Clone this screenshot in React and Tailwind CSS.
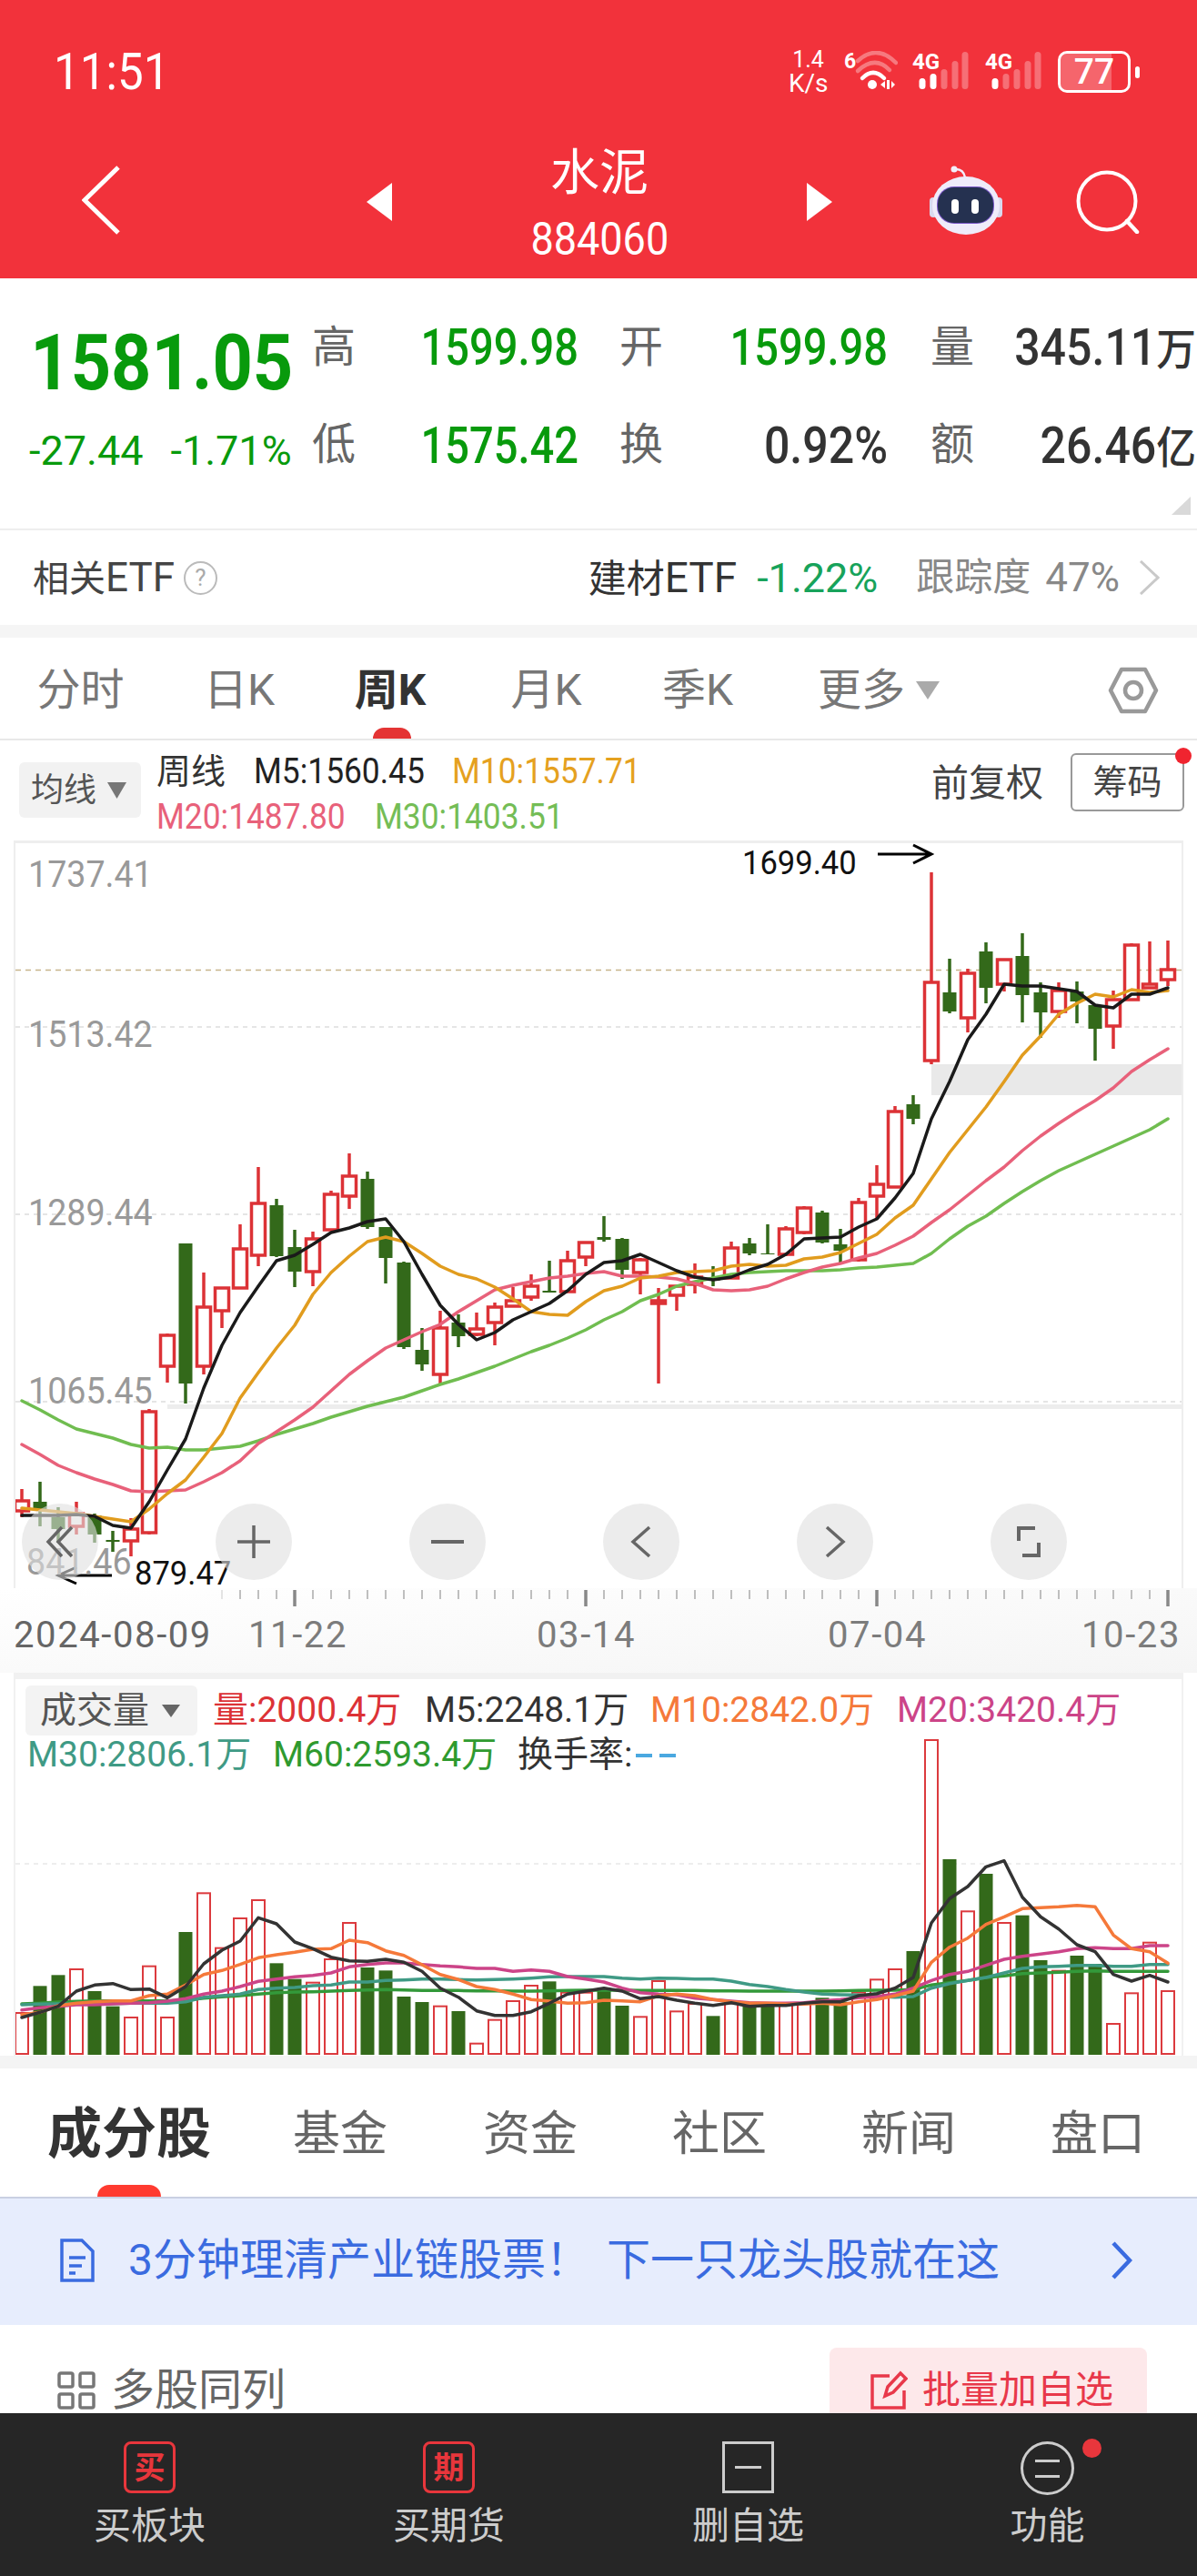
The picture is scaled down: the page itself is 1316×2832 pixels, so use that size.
import React from "react";

const NUM = "font-['Roboto','Noto_Sans_CJK_SC',sans-serif]";

// [kind, bodyTop, bodyBottom, wickTop, wickBottom]
const candles = [
  ["r",1651,1662,1638,1669],["g",1652,1660,1630,1679],["g",1669,1682,1658,1697],["r",1665,1679,1652,1688],
  ["g",1667,1688,1665,1697],["g",1694,1696,1684,1707],["r",1682,1695,1670,1712],["r",1553,1686,1550,1688],
  ["r",1469,1503,1467,1521],["g",1368,1522,1368,1544],["r",1438,1503,1400,1512],["r",1417,1442,1417,1461],
  ["r",1374,1417,1347,1417],["r",1324,1381,1284,1393],["g",1326,1382,1319,1383],["g",1372,1399,1353,1416],
  ["r",1363,1399,1355,1415],["r",1314,1353,1310,1353],["r",1294,1316,1269,1330],["g",1297,1350,1289,1352],
  ["g",1350,1384,1350,1412],["g",1389,1482,1388,1484],["g",1485,1501,1461,1508],["r",1461,1512,1442,1523],
  ["g",1455,1470,1446,1482],["r",1462,1468,1444,1470],["r",1438,1455,1433,1480],["r",1431,1437,1416,1437],
  ["r",1415,1427,1402,1431],["g",1420,1422,1387,1422],["r",1387,1421,1376,1421],["r",1367,1383,1367,1393],
  ["g",1361,1364,1338,1366],["g",1363,1397,1362,1407],["r",1386,1400,1384,1424],["r",1431,1434,1417,1522],
  ["r",1415,1425,1415,1442],["r",1405,1413,1390,1423],["g",1407,1409,1393,1415],["r",1373,1406,1366,1406],
  ["g",1368,1379,1362,1381],["g",1379,1380,1347,1380],["r",1352,1380,1349,1382],["r",1329,1356,1327,1358],
  ["g",1334,1367,1332,1368],["g",1369,1376,1352,1389],["r",1323,1386,1318,1388],["r",1303,1316,1282,1340],
  ["r",1223,1306,1217,1307],["g",1215,1231,1205,1237],["r",1081,1167,960,1171],["g",1092,1113,1055,1115],
  ["r",1071,1120,1066,1136],["g",1047,1087,1037,1104],["r",1056,1083,1056,1091],["g",1052,1095,1027,1125],
  ["g",1092,1114,1081,1142],["r",1090,1113,1081,1120],["g",1091,1102,1080,1126],["g",1106,1132,1106,1167],
  ["r",1100,1129,1090,1154],["r",1040,1100,1038,1101],["r",1083,1087,1036,1087],["r",1067,1078,1035,1085],
];

const ma5 = [1667,1667,1667,1666,1668,1678,1681,1652,1617,1583,1527,1480,1444,1415,1387,1381,1369,1356,1351,1344,1341,1366,1402,1436,1457,1474,1466,1452,1443,1434,1420,1402,1389,1387,1380,1389,1398,1405,1408,1405,1397,1391,1380,1363,1362,1361,1350,1341,1318,1291,1231,1190,1144,1116,1083,1085,1085,1088,1091,1106,1109,1094,1094,1087];
const ma10 = [1659,1661,1663,1665,1668,1671,1674,1660,1643,1628,1603,1577,1538,1510,1483,1458,1424,1400,1382,1366,1361,1366,1379,1393,1402,1407,1416,1429,1443,1446,1447,1432,1420,1415,1406,1404,1400,1399,1398,1393,1391,1393,1392,1385,1383,1378,1368,1358,1340,1326,1297,1268,1243,1218,1190,1161,1140,1116,1104,1094,1097,1089,1092,1090];
const ma20 = [1589,1600,1612,1620,1627,1633,1640,1641,1640,1639,1630,1620,1607,1588,1575,1562,1548,1530,1512,1497,1483,1474,1465,1457,1443,1431,1419,1414,1410,1406,1404,1401,1399,1404,1404,1405,1407,1412,1419,1420,1419,1415,1407,1400,1394,1390,1384,1379,1370,1360,1345,1331,1315,1299,1284,1266,1250,1236,1223,1211,1197,1179,1166,1154];
const ma30 = [1541,1551,1562,1572,1577,1582,1589,1593,1592,1595,1595,1593,1591,1585,1578,1572,1566,1559,1553,1547,1542,1537,1530,1523,1517,1510,1503,1495,1487,1480,1472,1463,1452,1443,1431,1424,1415,1410,1406,1402,1400,1399,1398,1398,1398,1397,1395,1394,1392,1390,1379,1363,1349,1338,1324,1311,1299,1288,1279,1270,1261,1252,1243,1231];

// volume bar tops, on a scale three times finer than the page
const volTops = [1122,1033,997,978,1050,1100,1137,968,1137,855,727,908,810,750,958,1010,1022,945,825,972,982,1068,1086,1100,1116,1223,1145,1083,1032,1018,1055,1055,1040,1098,1135,1017,1117,1092,1132,1090,1095,1095,1090,1090,1072,1085,1055,1012,978,918,222,615,787,663,825,800,948,983,933,960,1158,1057,890,1050];
const volM5 = [1137,1120,1100,1050,1030,1025,1045,1043,1072,1035,960,915,885,808,828,888,910,938,950,952,945,955,985,1040,1070,1115,1130,1130,1118,1090,1060,1050,1040,1050,1075,1068,1080,1090,1097,1088,1100,1097,1097,1090,1085,1085,1065,1058,1040,1005,825,745,705,640,620,740,805,845,897,920,995,1017,998,1020];
const volM10 = [1128,1120,1098,1090,1085,1082,1082,1065,1060,1030,995,982,962,940,930,922,912,910,882,890,917,932,963,995,1012,1035,1045,1060,1078,1083,1090,1088,1080,1082,1085,1065,1060,1065,1078,1085,1090,1090,1093,1093,1090,1095,1085,1078,1065,1050,955,905,875,830,805,778,775,772,767,772,865,910,920,958];
const volM20 = [1112,1105,1100,1095,1095,1092,1090,1088,1083,1075,1060,1050,1035,1018,1010,1003,998,990,970,962,957,957,962,967,970,975,975,985,980,985,1002,1010,1020,1040,1055,1060,1062,1073,1078,1083,1088,1090,1090,1088,1082,1078,1072,1068,1060,1040,1015,995,985,965,945,935,928,920,910,907,910,910,900,900];
const volM30 = [1095,1093,1092,1092,1091,1091,1090,1090,1090,1085,1070,1065,1060,1045,1040,1038,1032,1030,1020,1020,1015,1013,1010,1010,1012,1013,1012,1010,1007,1003,1002,1002,1002,1007,1010,1007,1008,1010,1010,1017,1028,1035,1045,1053,1060,1062,1063,1067,1070,1068,1040,1025,1015,1005,990,975,970,968,965,965,968,968,962,962];
const volM60 = [1092,1090,1086,1084,1082,1082,1082,1082,1082,1080,1073,1069,1065,1060,1055,1053,1052,1050,1048,1046,1045,1046,1048,1048,1048,1049,1049,1050,1050,1049,1048,1047,1047,1047,1048,1048,1048,1048,1049,1049,1050,1050,1050,1050,1050,1049,1048,1047,1047,1045,1030,1022,1015,1005,1000,992,990,988,985,983,985,985,985,985];

const cx = (i) => 24 + 20 * i;
const volY = (z) => 1840 + z / 3;
const pts = (arr) => arr.map((y, i) => `${cx(i)},${y}`).join(" ");
const volPts = (arr) => arr.map((y, i) => `${cx(i)},${volY(y).toFixed(1)}`).join(" ");

function Line({ points, color, width = 3.5 }) {
  return <polyline points={points} fill="none" stroke={color} strokeWidth={width} strokeLinejoin="round" strokeLinecap="round" />;
}

function Signal({ active }) {
  const bars = [[11, 12], [23, 17], [35, 22], [47, 31], [58, 41]];
  return (
    <div className="relative w-[63px] h-[46px]">
      <svg width="63" height="46" viewBox="0 0 63 46" className="block">
        {bars.map(([x, h], i) => (
          <rect key={i} x={x - 3.5} y={42 - h} width="7" height={h} rx="3.5" fill="#fff" opacity={i < active ? 1 : 0.3} />
        ))}
      </svg>
      <span className="absolute left-0 top-0 text-[24px] leading-none font-bold">4G</span>
    </div>
  );
}

function StatusIcons() {
  return (
    <div className={`flex items-center ${NUM} text-white`}>
      <div className="w-[43px] text-center">
        <div className="text-[25px] leading-[26px]">1.4</div>
        <div className="text-[28px] leading-[26px]">K/s</div>
      </div>
      <div className="relative ml-[18px] w-[59px] h-[46px]">
        <svg width="59" height="46" viewBox="0 0 59 46" fill="none" stroke="#fff" className="block">
          <path d="M15 11Q36-8 57 13" strokeOpacity=".35" strokeWidth="4.5" strokeLinecap="round" />
          <path d="M15 22Q34 4.500 50 21" strokeOpacity=".35" strokeWidth="4.5" strokeLinecap="round" />
          <path d="M20 30Q32 18 44 30" strokeWidth="4.5" strokeLinecap="round" />
          <circle cx="31" cy="37" r="5" fill="#fff" stroke="none" />
          <path d="M40 37l5-4v8zM47 32h3v10h-3zM52 33l4 4-4 4z" fill="#fff" stroke="none" />
        </svg>
        <span className="absolute left-0 top-0 text-[23px] leading-none font-bold">6</span>
      </div>
      <div className="ml-[16px]"><Signal active={2} /></div>
      <div className="ml-[17px]"><Signal active={1} /></div>
      <div className="ml-[17px] w-[80px] h-[46px] rounded-[10px] border-[3px] border-white flex items-center overflow-hidden relative">
        <div className="absolute inset-y-0 left-0 w-[76%] bg-white/25" />
        <span className="relative w-[74px] text-center text-[39px] leading-none font-medium">77</span>
      </div>
      <div className="ml-[5px] w-[5px] h-[13px] rounded-full bg-white" />
    </div>
  );
}

function Robot() {
  return (
    <svg width="82" height="77" viewBox="0 0 82 77" className="block">
      <circle cx="28" cy="4" r="3.500" fill="#f3eefc" />
      <path d="M30 4c6 0 9 4 10 9" fill="none" stroke="#f3eefc" strokeWidth="2.500" />
      <rect x="1" y="35" width="8" height="22" rx="4" fill="#d9d9ee" />
      <rect x="73" y="35" width="8" height="22" rx="4" fill="#d9d9ee" />
      <ellipse cx="41" cy="44" rx="37" ry="32" fill="#efecfa" />
      <rect x="9" y="23" width="63" height="41" rx="19" fill="#7a58c8" />
      <rect x="10" y="24" width="61" height="39" rx="18" fill="#253150" />
      <rect x="25" y="37" width="8" height="16" rx="4" fill="#fff" />
      <rect x="47" y="37" width="8" height="16" rx="4" fill="#fff" />
    </svg>
  );
}

function Header() {
  return (
    <header className="h-[306px] bg-[#f2323b] text-white shrink-0">
      <div className="h-[158px] flex items-center justify-between pl-[59px] pr-[63px]">
        <span className={`${NUM} inline-block origin-left scale-x-[.93] text-[55px] leading-none`}>11:51</span>
        <StatusIcons />
      </div>
      <div className="h-[124px] flex items-center pl-[90px]">
        <svg width="42" height="76" viewBox="0 0 42 76" className="block shrink-0">
          <path d="M40 2 3 38l37 36" fill="none" stroke="#fff" strokeWidth="5" />
        </svg>
        <svg width="28" height="42" viewBox="0 0 28 42" className="block shrink-0 ml-[271px] mt-[4px]"><path d="M28 0v42L0 21z" fill="#fff" /></svg>
        <div className="w-[456px] shrink-0 flex flex-col items-center">
          <span className="text-[54px] leading-[52px] mt-[10px]">水泥</span>
          <span className={`${NUM} inline-block scale-x-[.9] text-[50px] leading-[44px] mt-[24px]`}>884060</span>
        </div>
        <svg width="28" height="42" viewBox="0 0 28 42" className="block shrink-0 mt-[4px]"><path d="M0 0v42l28-21z" fill="#fff" /></svg>
        <div className="ml-[106px]"><Robot /></div>
        <svg width="70" height="70" viewBox="0 0 70 70" className="block ml-[80px] mt-[4px]">
          <circle cx="34" cy="34" r="31.500" fill="none" stroke="#fff" strokeWidth="4" />
          <path d="m56 56 11 12" fill="none" stroke="#fff" strokeWidth="4.500" strokeLinecap="round" />
        </svg>
      </div>
    </header>
  );
}

function Quote() {
  const label = "text-[48px] leading-none text-[#666]";
  const green = `${NUM} origin-right scale-x-[.855] text-[55px] leading-none text-[#089a0c] text-right font-medium`;
  const dark = `${NUM} origin-right scale-x-[.91] whitespace-nowrap text-[55px] leading-none text-[#333] text-right font-medium`;
  return (
    <section className="relative h-[275px] pt-[23px] bg-white shrink-0">
      <div className="grid grid-cols-[343px_48px_245px_93px_247px_95px_244px] grid-rows-[106px_106px] items-center">
        <div className={`${NUM} pl-[37px] mt-[34px] origin-left scale-x-[.9] text-[86px] leading-none text-[#089a0c] font-bold whitespace-nowrap`}>1581.05</div>
        <div className={label}>高</div>
        <div className={green}>1599.98</div>
        <div className={`${label} text-right`}>开</div>
        <div className={green}>1599.98</div>
        <div className={`${label} text-right`}>量</div>
        <div className={dark}>345.11<span className="text-[48px]">万</span></div>

        <div className={`${NUM} pl-[32px] mt-[14px] flex gap-[30px] text-[45px] leading-none text-[#089a0c]`}>
          <span>-27.44</span>
          <span>-1.71%</span>
        </div>
        <div className={`${label} mt-[2px]`}>低</div>
        <div className={`${green} mt-[4px]`}>1575.42</div>
        <div className={`${label} text-right mt-[2px]`}>换</div>
        <div className={`${dark} mt-[4px]`}>0.92%</div>
        <div className={`${label} text-right mt-[2px]`}>额</div>
        <div className={`${dark} mt-[4px]`}>26.46<span className="text-[48px]">亿</span></div>
      </div>
      <svg width="21" height="20" viewBox="0 0 21 20" className="absolute right-[7px] bottom-[15px]"><path d="M21 0v20H0z" fill="#d9d9d9" /></svg>
    </section>
  );
}

function EtfRow() {
  return (
    <>
      <div className="h-[106px] shrink-0 flex items-center justify-between border-t-2 border-[#eeeeee] pl-[36px] pr-[41px] bg-white">
        <div className="flex items-center">
          <span className="text-[40px] leading-none text-[#444]"><span>相关</span><span className={`${NUM} text-[44px]`}>ETF</span></span>
          <span className="ml-[10px] w-[37px] h-[37px] rounded-full border-2 border-[#bbbbbb] text-[26px] leading-[33px] text-center text-[#aaaaaa]">?</span>
        </div>
        <div className="flex items-center">
          <span className="text-[42px] leading-none text-[#333]">建材<span className={`${NUM} text-[46px]`}>ETF</span></span>
          <span className={`${NUM} ml-[22px] text-[45px] leading-none text-[#17a35b]`}>-1.22%</span>
          <span className="ml-[42px] text-[42px] leading-none text-[#888]">跟踪度</span>
          <span className={`${NUM} ml-[16px] text-[44px] leading-none text-[#888]`}>47%</span>
          <svg width="23" height="38" viewBox="0 0 23 38" className="block ml-[21px]"><path d="m2 1 19 18L2 37" fill="none" stroke="#c9c9c9" strokeWidth="3" /></svg>
        </div>
      </div>
      <div className="h-[14px] shrink-0 bg-[#f5f5f5]" />
    </>
  );
}

function PeriodTabs() {
  const items = ["分时", "日K", "周K", "月K", "季K"];
  return (
    <div className="relative h-[113px] shrink-0 bg-white border-b-2 border-[#e8e8e8] flex items-center pl-[2px] pt-[5px]">
      <div className="grid grid-cols-[173px_176px_156px_187px_146px_210px] items-center">
        {items.map((t) => (
          <div key={t} className={`relative text-center text-[48px] leading-none ${t === "周K" ? "font-bold text-[#333]" : "text-[#777]"}`}>
            {t}
            {t === "周K" && <span className="absolute left-[59px] top-[65px] w-[42px] h-[12px] rounded-t-full rounded-b-[4px] bg-[#e43434]" />}
          </div>
        ))}
        <div className="flex items-center pl-[59px] text-[48px] leading-none text-[#777]">
          更多
          <svg width="26" height="20" viewBox="0 0 26 20" className="block ml-[12px] shrink-0"><path d="M0 0h26L13 20z" fill="#aaaaaa" /></svg>
        </div>
      </div>
      <svg width="56" height="52" viewBox="0 0 56 52" className="block ml-[168px]">
        <path d="M15 3h26l12 23-12 23H15L3 26z" fill="none" stroke="#999" strokeWidth="4.500" strokeLinejoin="round" />
        <circle cx="28" cy="26" r="9" fill="none" stroke="#999" strokeWidth="4.500" />
      </svg>
    </div>
  );
}

function Legend() {
  const item = `${NUM} origin-left scale-x-[.93] text-[38px] leading-none`;
  return (
    <div className="h-[110px] shrink-0 flex bg-white pl-[21px] pr-[14px] pt-[15px]">
      <div className="mt-[9px] w-[134px] h-[61px] rounded-[6px] bg-[#f2f2f2] flex items-center pl-[13px]">
        <span className="text-[36px] leading-none text-[#555]">均线</span>
        <svg width="21" height="18" viewBox="0 0 21 18" className="block ml-[12px]"><path d="M0 0h21L10.5 18z" fill="#777" /></svg>
      </div>
      <div className="ml-[17px] w-[560px]">
        <div className="flex items-center h-[38px]">
          <span className="text-[38px] leading-none text-[#333] w-[107px]">周线</span>
          <span className={`${item} text-[#222] w-[218px] whitespace-nowrap`}>M5:1560.45</span>
          <span className={`${item} text-[#e5a11f] whitespace-nowrap`}>M10:1557.71</span>
        </div>
        <div className="flex items-center h-[38px] mt-[12px]">
          <span className={`${item} text-[#e8617a] w-[240px] whitespace-nowrap`}>M20:1487.80</span>
          <span className={`${item} text-[#74bd56] whitespace-nowrap`}>M30:1403.51</span>
        </div>
      </div>
      <div className="ml-auto flex items-start">
        <span className="mt-[12px] text-[41px] leading-none text-[#444]">前复权</span>
        <div className="relative ml-[30px] -mt-[1px] w-[125px] h-[64px] rounded-[6px] border-2 border-[#999] flex items-center justify-center text-[38px] leading-none text-[#444]">
          筹码
          <span className="absolute -right-[10px] -top-[8px] w-[18px] h-[18px] rounded-full bg-[#f0242f]" />
        </div>
      </div>
    </div>
  );
}

function Candle({ c, i }) {
  const [kind, top, bottom, wt, wb] = c;
  const x = cx(i);
  if (kind === "r") {
    return (
      <g>
        <line x1={x} x2={x} y1={wt} y2={wb} stroke="#dc3236" strokeWidth="3.500" />
        <rect x={x - 7.5} y={top} width="15" height={bottom - top} fill="#fff" stroke="#dc3236" strokeWidth="3.500" />
      </g>
    );
  }
  return (
    <g>
      <line x1={x} x2={x} y1={wt} y2={wb} stroke="#33691a" strokeWidth="3.500" />
      <rect x={x - 7.5} y={top} width="15" height={bottom - top} fill="#33691a" />
    </g>
  );
}

function CircleButton({ children }) {
  return (
    <div className="w-[84px] h-[84px] rounded-full bg-[#e0e0e0]/60 flex items-center justify-center">
      <svg width="44" height="44" viewBox="0 0 44 44" fill="none" stroke="#666" strokeWidth="3.500">{children}</svg>
    </div>
  );
}

function PriceChart() {
  const priceLabels = [
    { t: "1737.41", c: "top-[15px]" },
    { t: "1513.42", c: "top-[191px]" },
    { t: "1289.44", c: "top-[387px]" },
    { t: "1065.45", c: "top-[583px]" },
  ];
  const label = `${NUM} absolute origin-left scale-x-[.94] text-[40px] leading-none text-[#999]`;
  return (
    <div className="relative h-[822px] shrink-0 mx-[15px] border-x-2 border-t-[3px] border-[#eeeeee] bg-white overflow-hidden">
      <svg viewBox="17 928 1282 819" className="block w-[1282px] h-[819px]">
        <line x1="17" x2="1299" y1="1067.500" y2="1067.500" stroke="#c8b48a" strokeWidth="1.500" strokeDasharray="6 5" />
        {[1130, 1336, 1542].map((y) => (
          <line key={y} x1="17" x2="1299" y1={y} y2={y} stroke="#dddddd" strokeWidth="1.500" strokeDasharray="5 5" />
        ))}
        <rect x="184" y="1545" width="1115" height="5" fill="#ededed" />
        <rect x="1024" y="1171" width="275" height="34" fill="#e9e9e9" />
        {candles.map((c, i) => <Candle key={i} c={c} i={i} />)}
        <Line points={pts(ma30)} color="#70bd50" />
        <Line points={pts(ma20)} color="#e8617a" />
        <Line points={pts(ma10)} color="#e19c1e" />
        <Line points={pts(ma5)} color="#1a1a1a" />
        <path d="M965 940h58M1004 930l20 10-20 10" fill="none" stroke="#000" strokeWidth="3" />
        <path d="M123 1733H66M84 1724l-20 9 20 9" fill="none" stroke="#000" strokeWidth="3" />
      </svg>
      {priceLabels.map((p) => (
        <span key={p.t} className={`${label} left-[14px] ${p.c}`}>{p.t}</span>
      ))}
      <span className={`${label} left-[12px] top-[771px]`}>841.46</span>
      <span className={`${NUM} absolute origin-left scale-x-[.96] left-[799px] top-[4px] text-[36px] leading-none text-[#111]`}>1699.40</span>
      <span className={`${NUM} absolute origin-left scale-x-[.96] left-[131px] top-[788px] text-[36px] leading-[30px] text-[#111]`}>879.47</span>
      <div className="absolute left-[7px] top-[726px] flex gap-[129px]">
        <CircleButton><path d="M24 6 9 22l15 16M35 6 20 22l15 16" /></CircleButton>
        <CircleButton><path d="M22 4v36M4 22h36" /></CircleButton>
        <CircleButton><path d="M4 22h36" strokeWidth="4" /></CircleButton>
        <CircleButton><path d="M31 6 13 22l18 16" /></CircleButton>
        <CircleButton><path d="m13 6 18 16-18 16" /></CircleButton>
        <CircleButton><path d="M11 21V7h18M33 23v14H15" strokeWidth="4" /></CircleButton>
      </div>
    </div>
  );
}

function XAxis() {
  const ticks = Array.from({ length: 53 }, (_, i) => 244 + i * 20);
  const majors = [324, 644, 964, 1284];
  return (
    <div className="h-[93px] shrink-0 bg-linear-to-br from-white via-[#fafafa] to-[#f5f5f5]">
      <svg viewBox="0 1747 1316 22" className="block w-[1316px] h-[22px]">
        {ticks.map((x) => {
          const major = majors.includes(x);
          return <line key={x} x1={x} x2={x} y1="1749" y2={major ? 1767 : 1759} stroke={major ? "#888" : "#aaa"} strokeWidth={major ? 3.5 : 1.5} opacity={x < 260 ? 0.4 : 1} />;
        })}
      </svg>
      <div className={`${NUM} grid grid-cols-[258px_317px_320px_279px_112px] pl-[15px] mt-[10px] text-[40px] leading-none tracking-[.04em] whitespace-nowrap text-[#7c7c7c]`}>
        <span className="text-[#666]">2024-08-09</span>
        <span>11-22</span>
        <span>03-14</span>
        <span>07-04</span>
        <span>10-23</span>
      </div>
    </div>
  );
}

function VolumeChart() {
  const fs = `${NUM} text-[39px] leading-none whitespace-nowrap`;
  return (
    <div className="relative h-[421px] shrink-0 mx-[15px] border-x-2 border-t-[7px] border-[#f1f1f1] bg-white overflow-hidden">
      <svg viewBox="17 1847 1282 414" className="block w-[1282px] h-[414px]">
        <line x1="17" x2="1299" y1="2050" y2="2050" stroke="#e8e8e8" strokeWidth="1.500" strokeDasharray="5 5" />
        {volTops.map((z, i) => {
          const top = volY(z);
          const x = cx(i);
          return candles[i][0] === "r"
            ? <rect key={i} x={x - 7} y={top} width="14" height={2259 - top} fill="#fff" stroke="#dc3a3e" strokeWidth="2" />
            : <rect key={i} x={x - 7.5} y={top} width="15" height={2260 - top} fill="#33691a" />;
        })}
        <Line points={volPts(volM60)} color="#33993a" width="3.500" />
        <Line points={volPts(volM30)} color="#3f9a85" width="3.500" />
        <Line points={volPts(volM20)} color="#cc4488" width="3.500" />
        <Line points={volPts(volM10)} color="#f5793a" width="3.500" />
        <Line points={volPts(volM5)} color="#333333" width="3.500" />
      </svg>
      <div className="absolute left-[11px] top-[7px] w-full">
        <div className="flex items-center">
          <div className="w-[189px] h-[55px] rounded-[6px] bg-[#f3f3f3] flex items-center pl-[16px]">
            <span className="text-[40px] leading-none text-[#555]">成交量</span>
            <svg width="20" height="14" viewBox="0 0 20 14" className="block ml-[14px]"><path d="M0 0h20L10 14z" fill="#666" /></svg>
          </div>
          <span className={`${fs} ml-[17px] w-[233px] text-[#dc3236]`}>量:2000.4万</span>
          <span className={`${fs} w-[248px] text-[#333]`}>M5:2248.1万</span>
          <span className={`${fs} w-[271px] text-[#f5793a]`}>M10:2842.0万</span>
          <span className={`${fs} text-[#cc4488]`}>M20:3420.4万</span>
        </div>
        <div className="flex items-center mt-[2px] pl-[2px]">
          <span className={`${fs} w-[270px] text-[#3f9a85]`}>M30:2806.1万</span>
          <span className={`${fs} w-[269px] text-[#2f9a2f]`}>M60:2593.4万</span>
          <span className="text-[39px] leading-none text-[#333]">换手率:</span>
          <span className="ml-[4px] flex gap-[8px]">
            <span className="w-[18px] h-[4px] bg-[#4aa8e0]" />
            <span className="w-[18px] h-[4px] bg-[#4aa8e0]" />
          </span>
        </div>
      </div>
    </div>
  );
}

function ContentTabs() {
  const items = [
    ["基金", "w-[209px]"], ["资金", "w-[208px]"], ["社区", "w-[208px]"], ["新闻", "w-[208px]"], ["盘口", "w-[110px]"],
  ];
  return (
    <div className="relative h-[141px] shrink-0 bg-white flex items-center pl-[52px] pt-[4px]">
      <span className="w-[270px] text-[60px] leading-none font-bold text-[#333]">成分股</span>
      {items.map(([t, w]) => (
        <span key={t} className={`${w} text-[52px] leading-none text-[#666]`}>{t}</span>
      ))}
      <span className="absolute left-[107px] bottom-0 w-[70px] h-[13px] rounded-t-full rounded-b-[5px] bg-[#ff3b30]" />
    </div>
  );
}

function Banner() {
  return (
    <div className="h-[141px] shrink-0 border-t-2 border-[#c9d0e2] bg-[#e7edfd] flex items-center pl-[66px] pb-[4px] text-[#3a6be0]">
      <svg width="38" height="48" viewBox="0 0 38 48" fill="none" stroke="#3a6be0" strokeWidth="3.500" className="block shrink-0">
        <path d="M2 2h22l12 12v32H2zM10 21h18M10 30h14M10 38h7" />
      </svg>
      <span className="ml-[37px] text-[48px] leading-none whitespace-nowrap">
        <span className={NUM}>3</span>分钟理清产业链股票！ <span className="ml-[7px]">下一只龙头股就在这</span>
      </span>
      <svg width="24" height="42" viewBox="0 0 24 42" fill="none" stroke="#3a6be0" strokeWidth="4.500" className="block shrink-0 ml-auto mr-[71px]">
        <path d="m3 2 18 19L3 40" />
      </svg>
    </div>
  );
}

function ListHeader() {
  return (
    <div className="flex-1 min-h-0 bg-white flex items-start pl-[63px] pr-[55px] overflow-hidden">
      <div className="flex items-center mt-[50px] text-[#666]">
        <svg width="42" height="42" viewBox="0 0 42 42" fill="none" stroke="#777" strokeWidth="3.500" className="block">
          <rect x="2" y="2" width="15" height="15" rx="2" />
          <rect x="25" y="2" width="15" height="15" rx="2" />
          <rect x="2" y="25" width="15" height="15" rx="2" />
          <rect x="25" y="25" width="15" height="15" rx="2" />
        </svg>
        <span className="ml-[17px] text-[48px] leading-[44px]">多股同列</span>
      </div>
      <div className="ml-auto mt-[25px] w-[349px] h-[90px] rounded-[8px] bg-[#fde8ea] flex items-start pl-[44px] pt-[25px] text-[#e8384a]">
        <svg width="42" height="44" viewBox="0 0 42 44" fill="none" stroke="#e8384a" strokeWidth="3.500" className="block">
          <path d="M22 6H3v35h35V22M17 28l3-10L34 3l6 6-14 15z" />
        </svg>
        <span className="ml-[16px] text-[42px] leading-[44px] whitespace-nowrap">批量加自选</span>
      </div>
    </div>
  );
}

function BottomBar() {
  const label = "text-[41px] leading-none text-[#cccccc] mt-[16px]";
  return (
    <nav className="h-[179px] shrink-0 bg-[#262626] grid grid-cols-[329px_329px_329px_329px] pt-[28px]">
      <div className="flex flex-col items-center">
        <div className="mt-[3px] w-[57px] h-[57px] rounded-[8px] border-[3px] border-[#e8363c] flex items-center justify-center text-[34px] leading-none font-bold text-[#e8363c]">买</div>
        <span className={label}>买板块</span>
      </div>
      <div className="flex flex-col items-center">
        <div className="mt-[3px] w-[57px] h-[57px] rounded-[8px] border-[3px] border-[#e8363c] flex items-center justify-center text-[34px] leading-none font-bold text-[#e8363c]">期</div>
        <span className={label}>买期货</span>
      </div>
      <div className="flex flex-col items-center">
        <div className="mt-[3px] w-[57px] h-[57px] border-[3px] border-[#cccccc] flex items-center justify-center">
          <span className="w-[29px] h-[3px] bg-[#cccccc]" />
        </div>
        <span className={label}>删自选</span>
      </div>
      <div className="flex flex-col items-center">
        <div className="relative mt-[3px] w-[59px] h-[59px] rounded-full border-[3px] border-[#cccccc] flex flex-col items-center justify-center gap-[14px]">
          <span className="w-[27px] h-[3px] bg-[#cccccc]" />
          <span className="w-[27px] h-[3px] bg-[#cccccc]" />
          <span className="absolute -right-[33px] -top-[6px] w-[21px] h-[21px] rounded-full bg-[#e8363c]" />
        </div>
        <span className="text-[41px] leading-none text-[#cccccc] mt-[14px]">功能</span>
      </div>
    </nav>
  );
}

export default function App() {
  return (
    <div className="w-[1316px] h-[2832px] overflow-hidden flex flex-col bg-white font-['Roboto','Noto_Sans_CJK_SC',sans-serif]">
      <Header />
      <Quote />
      <EtfRow />
      <PeriodTabs />
      <Legend />
      <PriceChart />
      <XAxis />
      <VolumeChart />
      <div className="h-[14px] shrink-0 bg-[#f4f4f4]" />
      <ContentTabs />
      <Banner />
      <ListHeader />
      <BottomBar />
    </div>
  );
}
